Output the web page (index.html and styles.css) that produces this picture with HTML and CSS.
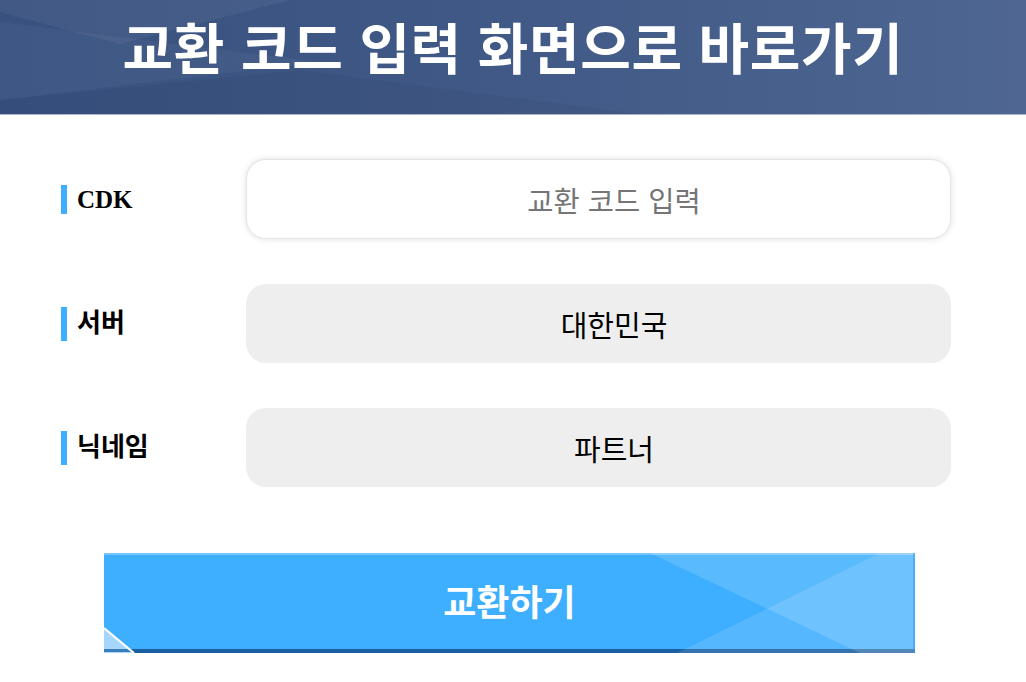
FILE: index.html
```html
<!DOCTYPE html>
<html lang="ko">
<head>
<meta charset="utf-8">
<title>교환 코드 입력</title>
<link rel="stylesheet" href="styles.css">
</head>
<body>
<header class="topbar">
  <svg class="topbar-deco" viewBox="0 0 1026 114" preserveAspectRatio="none" aria-hidden="true">
    <polygon points="0,0 290,0 120,44 0,12" fill="rgba(255,255,255,0.05)"/>
    <polygon points="0,22 320,62 0,100" fill="rgba(255,255,255,0.04)"/>
    <polygon points="0,100 300,70 640,114 0,114" fill="rgba(0,0,0,0.04)"/>
  </svg>
  <h1 class="title">교환 코드 입력 화면으로 바로가기</h1>
</header>

<main class="form">
  <div class="row">
    <div class="label label-latin">CDK</div>
    <input class="field field-input" type="text" placeholder="교환 코드 입력">
  </div>
  <div class="row">
    <div class="label">서버</div>
    <input class="field field-static" type="text" value="대한민국" readonly>
  </div>
  <div class="row">
    <div class="label">닉네임</div>
    <input class="field field-static" type="text" value="파트너" readonly>
  </div>

  <button class="submit" type="button">
    <svg class="submit-deco" viewBox="0 0 811 100" preserveAspectRatio="none" aria-hidden="true">
      <rect x="0" y="96" width="811" height="4" fill="#1a5fa3"/>
      <rect x="0" y="0" width="811" height="2" fill="rgba(255,255,255,0.3)"/>
      <polygon points="546,0 811,0 811,100 756,100" fill="rgba(255,255,255,0.15)"/>
      <polygon points="776,0 811,0 811,100 573,100" fill="rgba(255,255,255,0.12)"/>
      <polygon points="0,76 29,100 0,100" fill="#a5d6fc"/>
      <rect x="0" y="96" width="27" height="3" fill="#3b7cba"/>
      <line x1="0" y1="75" x2="30" y2="100" stroke="#ffffff" stroke-width="2.2"/>
      <rect x="809" y="0" width="2" height="100" fill="rgba(40,150,240,0.5)"/>
    </svg>
    <span class="submit-text">교환하기</span>
  </button>
</main>
</body>
</html>
```

FILE: styles.css
```css
* {
  box-sizing: border-box;
}

body {
  margin: 0;
  background: #ffffff;
  font-family: "Noto Sans CJK KR", "Noto Sans", sans-serif;
}

.topbar {
  position: relative;
  height: 115px;
  background: linear-gradient(90deg, #38517f 0%, #3f5885 45%, #4e6691 100%);
  border-bottom: 1px solid #a8b4c9;
  overflow: hidden;
}

.topbar-deco {
  position: absolute;
  left: 0;
  top: 0;
  width: 100%;
  height: 100%;
}

.title {
  position: relative;
  margin: 0;
  padding-top: 5px;
  text-align: center;
  color: #ffffff;
  font-size: 55px;
  font-weight: 700;
  line-height: 80px;
  letter-spacing: 0.6px;
  font-family: "Noto Sans CJK KR", sans-serif;
}

.form {
  padding: 44px 75px 0 61px;
}

.row {
  display: flex;
  align-items: center;
  margin-bottom: 45px;
}

.label {
  width: 185px;
  flex: none;
  border-left: 6px solid #3eaefe;
  padding-left: 10px;
  font-family: "Liberation Serif", "Noto Sans CJK KR", serif;
  font-weight: 700;
  font-size: 26px;
  line-height: 34px;
  color: #000000;
}

.label-latin {
  font-size: 25px;
  line-height: 29px;
}

.field {
  flex: 1;
  height: 80px;
  border-radius: 20px;
  padding: 0 0 0 31px;
  text-align: center;
  font-family: "Noto Sans CJK KR", sans-serif;
  font-size: 29px;
  color: #000000;
  outline: none;
}

.field-input {
  background: #ffffff;
  border: 1px solid #e4e4e4;
  box-shadow: 0 0 6px rgba(0, 0, 0, 0.12);
  font-size: 28.5px;
}

.field-input::placeholder {
  color: #757575;
}

.field-static {
  background: #eeeeee;
  border: none;
  height: 79px;
}

.submit {
  position: relative;
  display: flex;
  align-items: center;
  justify-content: center;
  width: 811px;
  height: 100px;
  margin: 66px 0 0 43px;
  padding: 0 0 6px 0;
  border: none;
  background: #3eaefe;
  cursor: pointer;
}

.submit-deco {
  position: absolute;
  left: 0;
  top: 0;
  width: 100%;
  height: 100%;
}

.submit-text {
  position: relative;
  color: #ffffff;
  font-family: "Noto Sans CJK KR", sans-serif;
  font-weight: 700;
  font-size: 36px;
}
```
